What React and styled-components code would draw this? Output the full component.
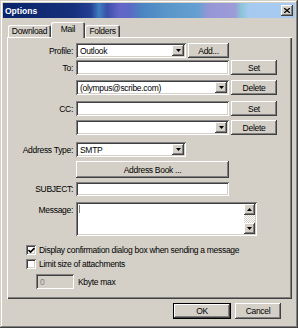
import styled, { createGlobalStyle } from 'styled-components';

const GlobalStyle = createGlobalStyle`
  html, body {
    margin: 0;
    padding: 0;
    background: #ffffff;
  }
  body {
    font-family: 'Liberation Sans', Arial, sans-serif;
    font-size: 8.5px;
    letter-spacing: -0.3px;
    color: #000;
  }
  * {
    box-sizing: border-box;
  }
`;

const face = '#d4d0c8';

const raised = `
  box-shadow: inset -1px -1px #404040, inset 1px 1px #ffffff,
    inset -2px -2px #808080, inset 2px 2px ${face};
`;

const sunken = `
  box-shadow: inset 1px 1px #808080, inset -1px -1px #ffffff,
    inset 2px 2px #404040, inset -2px -2px ${face};
`;

const Window = styled.div`
  width: 298px;
  height: 328px;
  background: ${face};
  padding: 3px;
  display: flex;
  flex-direction: column;
  box-shadow: inset -1px -1px #404040, inset 1px 1px ${face},
    inset -2px -2px #808080, inset 2px 2px #ffffff;
`;

const TitleBar = styled.div`
  height: 15px;
  display: flex;
  align-items: center;
  justify-content: space-between;
  padding: 0 2px 0 2px;
  color: #fff;
  font-weight: bold;
  letter-spacing: 0;
  background: linear-gradient(
    90deg,
    #0a246a 0px,
    #16307c 70px,
    #243f94 88px,
    #3f7fc0 96px,
    #3a4fa8 104px,
    #6464c8 116px,
    #5a6cc4 128px,
    #4a86c2 140px,
    #5b96ca 165px,
    #66a0d2 195px,
    #9696d6 205px,
    #9c9cd8 232px,
    #8cc4d8 238px,
    #a6caf0 246px,
    #a6caf0 100%
  );
`;

const CloseButton = styled.div`
  width: 12px;
  height: 11px;
  background: ${face};
  ${raised};
  display: flex;
  align-items: center;
  justify-content: center;
`;

const Body = styled.div`
  flex: 1;
  display: flex;
  flex-direction: column;
  padding: 0 0 0 4px;
`;

const TabStrip = styled.div`
  display: flex;
  align-items: flex-end;
  height: 15px;
  margin-top: 4px;
  padding-left: 1px;
`;

const Tab = styled.div`
  position: relative;
  z-index: ${(p) => (p.$active ? 1 : 0)};
  width: ${(p) => p.$w}px;
  height: ${(p) => (p.$active ? 16 : 12)}px;
  margin-bottom: ${(p) => (p.$active ? -1 : 0)}px;
  background: ${face};
  border-radius: 2px 2px 0 0;
  box-shadow: inset 1px 1px #ffffff, inset -1px 0 #404040, inset -2px 0 #808080;
  display: flex;
  justify-content: center;
  white-space: nowrap;
  padding-top: ${(p) => (p.$active ? 2 : 1)}px;
`;

const Panel = styled.div`
  width: 285px;
  height: 262px;
  background: ${face};
  box-shadow: inset 1px 1px #ffffff, inset -1px -1px #404040, inset -2px -2px #808080;
  display: flex;
  flex-direction: column;
  padding-top: 6px;
`;

const Row = styled.div`
  display: flex;
  align-items: ${(p) => (p.$top ? 'flex-start' : 'center')};
  gap: 2px;
  margin-top: ${(p) => p.$mt || 0}px;
  padding-left: ${(p) => p.$indent || 0}px;
`;

const Label = styled.div`
  width: 67px;
  flex-shrink: 0;
  text-align: right;
  padding-right: 1px;
  padding-top: ${(p) => p.$pt || 0}px;
`;

const Caption = styled.span`
  margin-left: 2px;
`;

const Field = styled.div`
  width: ${(p) => p.$w}px;
  height: ${(p) => p.$h || 15}px;
  background: ${(p) => (p.$disabled ? face : '#fff')};
  color: ${(p) => (p.$disabled ? '#808080' : '#000')};
  ${sunken};
  display: flex;
  align-items: center;
  padding: 2px;
  position: relative;
`;

const FieldText = styled.span`
  flex: 1;
  padding-left: 2px;
  white-space: nowrap;
  overflow: hidden;
`;

const DropButton = styled.div`
  width: 12px;
  height: 11px;
  background: ${face};
  ${raised};
  display: flex;
  align-items: center;
  justify-content: center;
`;

const Button = styled.div`
  width: ${(p) => p.$w}px;
  height: ${(p) => p.$h || 15}px;
  background: ${face};
  display: flex;
  align-items: center;
  justify-content: center;
  white-space: nowrap;
  ${(p) =>
    p.$default
      ? `box-shadow: inset 0 0 0 1px #000, inset -2px -2px #404040, inset 2px 2px #ffffff, inset -3px -3px #808080;`
      : raised}
`;

const Caret = styled.div`
  position: absolute;
  left: 3px;
  top: 3px;
  width: 1px;
  height: 8px;
  background: #808080;
`;

const ScrollBar = styled.div`
  position: absolute;
  right: 2px;
  top: 2px;
  bottom: 2px;
  width: 11px;
  display: flex;
  flex-direction: column;
  justify-content: space-between;
  background-color: #eeeeee;
  background-image: repeating-conic-gradient(#ffffff 0 25%, ${face} 0 50%);
  background-size: 2px 2px;
`;

const ScrollArrow = styled.div`
  width: 11px;
  height: 11px;
  background: ${face};
  ${raised};
  display: flex;
  align-items: center;
  justify-content: center;
`;

const CheckRow = styled.div`
  display: flex;
  align-items: center;
  gap: 3px;
  margin-top: ${(p) => p.$mt}px;
  padding-left: 19px;
`;

const CheckBox = styled.div`
  width: 10px;
  height: 10px;
  background: #fff;
  ${sunken};
  display: flex;
  align-items: center;
  justify-content: center;
`;

const Footer = styled.div`
  display: flex;
  justify-content: flex-end;
  gap: 4px;
  margin-top: 4px;
  padding-right: 14px;
`;

const Arrow = ({ up }) => (
  <svg width="5" height="3" viewBox="0 0 5 3">
    <polygon points={up ? '2.5,0 5,3 0,3' : '0,0 5,0 2.5,3'} fill="#000" />
  </svg>
);

const Combo = ({ w, text }) => (
  <Field $w={w}>
    <FieldText>{text}</FieldText>
    <DropButton>
      <Arrow />
    </DropButton>
  </Field>
);

const App = () => (
  <>
    <GlobalStyle />
    <Window>
      <TitleBar>
        <span>Options</span>
        <CloseButton>
          <svg width="6" height="5" viewBox="0 0 6 5">
            <path d="M0 0 L6 5 M6 0 L0 5" stroke="#000" strokeWidth="1.3" />
          </svg>
        </CloseButton>
      </TitleBar>
      <Body>
        <TabStrip>
          <Tab $w={43}>Download</Tab>
          <Tab $w={34} $active>
            Mail
          </Tab>
          <Tab $w={35}>Folders</Tab>
        </TabStrip>
        <Panel>
          <Row>
            <Label>Profile:</Label>
            <Combo w={110} text="Outlook" />
            <Button $w={41}>Add...</Button>
          </Row>
          <Row $mt={2}>
            <Label>To:</Label>
            <Field $w={153} />
            <Button $w={46}>Set</Button>
          </Row>
          <Row $mt={5}>
            <Label />
            <Combo w={153} text="(olympus@scribe.com)" />
            <Button $w={46}>Delete</Button>
          </Row>
          <Row $mt={6}>
            <Label>CC:</Label>
            <Field $w={153} />
            <Button $w={46}>Set</Button>
          </Row>
          <Row $mt={4}>
            <Label />
            <Combo w={153} text="" />
            <Button $w={46}>Delete</Button>
          </Row>
          <Row $mt={7}>
            <Label>Address Type:</Label>
            <Combo w={110} text="SMTP" />
          </Row>
          <Row $mt={4}>
            <Label />
            <Button $w={153} $h={17}>
              Address Book ...
            </Button>
          </Row>
          <Row $mt={4}>
            <Label>SUBJECT:</Label>
            <Field $w={153} $h={14} />
          </Row>
          <Row $mt={6} $top>
            <Label $pt={3}>Message:</Label>
            <Field $w={181} $h={34}>
              <Caret />
              <ScrollBar>
                <ScrollArrow>
                  <Arrow up />
                </ScrollArrow>
                <ScrollArrow>
                  <Arrow />
                </ScrollArrow>
              </ScrollBar>
            </Field>
          </Row>
          <CheckRow $mt={9}>
            <CheckBox>
              <svg width="7" height="7" viewBox="0 0 7 7">
                <path d="M0.5 3 L2.5 5 L6.5 1" stroke="#000" strokeWidth="1.6" fill="none" />
              </svg>
            </CheckBox>
            <span>Display confirmation dialog box when sending a message</span>
          </CheckRow>
          <CheckRow $mt={4}>
            <CheckBox />
            <span>Limit size of attachments</span>
          </CheckRow>
          <Row $mt={5} $indent={29}>
            <Field $w={38} $disabled>
              <FieldText>0</FieldText>
            </Field>
            <Caption>Kbyte max</Caption>
          </Row>
        </Panel>
        <Footer>
          <Button $w={58} $h={16} $default>
            OK
          </Button>
          <Button $w={46} $h={16}>
            Cancel
          </Button>
        </Footer>
      </Body>
    </Window>
  </>
);

export default App;
